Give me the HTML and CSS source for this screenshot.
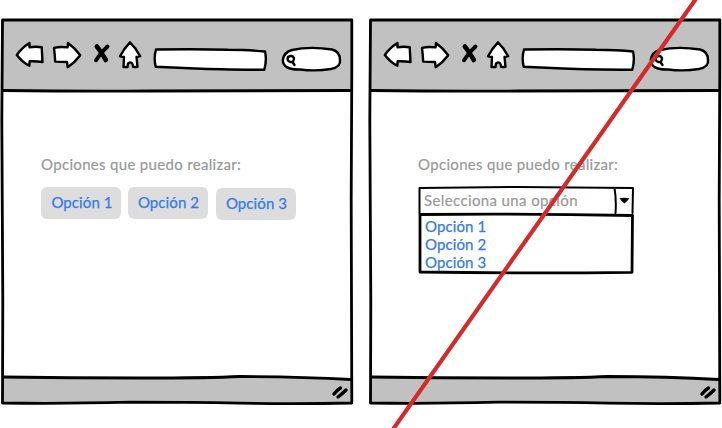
FILE: index.html
```html
<!DOCTYPE html>
<html lang="es">
<head>
<meta charset="utf-8">
<title>Opciones</title>
<link rel="stylesheet" href="styles.css">
</head>
<body>
<svg class="defs" aria-hidden="true">
  <symbol id="frame" viewBox="0 0 354 428">
    <path class="fill-bar" d="M3 20H351V91H3ZM3 377Q70 378 140 378T240 376.500Q300 376.500 351 379.500V403H3Z"/>
    <path class="ink edge" d="M2.500 20H351.800V70L351.200 200L351.800 403Q300 404 240 403.200Q190 402.200 130 402.200Q60 404 2.500 403L2.800 300L1.800 120L2.500 20"/>
    <path class="ink edge" d="M3 90.500Q80 91.500 150 91T351 90.500M3 377Q70 378 140 378T240 376.500Q300 376.500 351 379.500"/>
    <path class="ink grip" d="M334 394Q336.500 390.500 340.500 388M338 397Q342 394 346 390"/>
  </symbol>
  <symbol id="back" viewBox="15 40 30 30"><path class="ink paper" d="M16.800 55Q22 47.500 29.500 43L29.500 47.200Q36 46.200 41.700 47.200L42.500 62Q36 61 29.700 61.300L29.300 65.800Q22 62 16.800 55Z"/></symbol>
  <symbol id="forward" viewBox="51 40 32 30"><path class="ink paper" d="M54 47.800Q60 46.500 67.600 47.400L68 43Q75 48 80.200 55.300Q75 62.500 67.700 67.200L67 62L55.200 61.600Q54.800 54 54 47.800Z"/></symbol>
  <symbol id="stop" viewBox="92 40 20 30"><path class="ink stroke-a" d="M96.800 46.500Q101 51.500 105.800 60"/><path class="ink stroke-b" d="M107.500 46.500Q101 52 96 60.200"/></symbol>
  <symbol id="home" viewBox="118 40 24 30"><path class="ink paper" d="M130 42.300Q136 48 140.200 56.200L136.500 57L137.500 66.800Q135 67.200 133 66.800Q133 64.500 131.800 63Q129.500 61.700 128 63.500L127.500 67L123.500 67L124 57L120 56.200Q124 48.500 130 42.300Z"/></symbol>
  <symbol id="address" viewBox="152 40 116 34"><path class="ink paper" d="M156 49.500Q200 48.800 228 49.800Q250 50 265 51.500Q267 60 264.300 69.800Q220 69.500 195 68.500Q175 67.500 155.700 66.700Q153.500 58 156 49.500Z"/></symbol>
  <symbol id="search" viewBox="280 40 64 34"><path class="ink paper" d="M292 50Q310 46 332 49.500Q340 51.500 340 60Q341 67 331 69Q316 71.500 300 69.500Q283 70 282.800 60Q284 52 292 50Z"/><path class="ink" d="M288 57Q292 54.500 294 58Q294 62.500 290.500 62Q286.500 61 288 57M292.500 62L294.500 65"/></symbol>
</svg>

<main class="board">
  <section class="window">
    <svg class="frame"><use href="#frame"/></svg>
    <nav class="toolbar">
      <svg class="back"><use href="#back"/></svg>
      <svg class="forward"><use href="#forward"/></svg>
      <svg class="stop"><use href="#stop"/></svg>
      <svg class="home"><use href="#home"/></svg>
      <svg class="address"><use href="#address"/></svg>
      <svg class="search"><use href="#search"/></svg>
    </nav>
    <div class="content">
      <p class="prompt">Opciones que puedo realizar:</p>
      <div class="buttons">
        <button class="first">Opción 1</button>
        <button>Opción 2</button>
        <button class="last">Opción 3</button>
      </div>
    </div>
  </section>

  <section class="window">
    <svg class="frame"><use href="#frame"/></svg>
    <nav class="toolbar">
      <svg class="back"><use href="#back"/></svg>
      <svg class="forward"><use href="#forward"/></svg>
      <svg class="stop"><use href="#stop"/></svg>
      <svg class="home"><use href="#home"/></svg>
      <svg class="address"><use href="#address"/></svg>
      <svg class="search"><use href="#search"/></svg>
    </nav>
    <div class="content content-select">
      <p class="prompt">Opciones que puedo realizar:</p>
      <div class="dropdown">
        <svg class="dropdown-lines" viewBox="0 0 218 90">
          <path class="ink thin" d="M1.500 3L100 2L215 3L214.500 28M1.500 3L1.500 28.500M196.500 3Q198.500 15 197.500 28"/>
          <path class="ink edge" d="M2 29.500Q110 28.500 214.500 30.500L214 87.300Q110 88.500 2 87Z"/>
          <path d="M201.500 13.200Q206 12.500 211.500 13.200Q209 16.500 206.500 18.500Q203.500 16.500 201.500 13.200Z"/>
        </svg>
        <div class="selected">Selecciona una opción</div>
        <ul class="options">
          <li>Opción 1</li>
          <li>Opción 2</li>
          <li>Opción 3</li>
        </ul>
      </div>
    </div>
  </section>
  <svg class="strike" viewBox="0 0 722 428"><path d="M696.500 -2L392.500 430"/></svg>
</main>
</body>
</html>
```

FILE: styles.css
```css
* { box-sizing: border-box; }

body {
  margin: 0;
  background: #fff;
  font-family: Lato, "Open Sans", sans-serif;
  font-size: 15px;
  line-height: 18px;
  overflow: hidden;
}

.defs { position: absolute; width: 0; height: 0; }

.ink {
  fill: none;
  stroke: #000;
  stroke-width: 2.4;
  stroke-linecap: round;
  stroke-linejoin: round;
}
.thin { stroke-width: 2; }
.edge { stroke-width: 2.8; }
.grip { stroke-width: 3.4; }
.stroke-a { stroke-width: 4.6; }
.stroke-b { stroke-width: 4; }
.paper { fill: #fff; }
.fill-bar { fill: #c1c1c1; }

.board {
  position: relative;
  display: flex;
  gap: 14px;
  width: 722px;
  height: 428px;
  overflow: hidden;
}

.window {
  position: relative;
  flex: none;
  width: 354px;
  height: 428px;
}

.frame {
  position: absolute;
  inset: 0;
  z-index: -1;
  width: 354px;
  height: 428px;
}

.toolbar {
  display: flex;
  height: 91px;
  padding: 40px 0 0 15px;
}
.toolbar svg { flex: none; height: 30px; }
.toolbar .back { width: 30px; margin-right: 6px; }
.toolbar .forward { width: 32px; margin-right: 9px; }
.toolbar .stop { width: 20px; margin-right: 6px; }
.toolbar .home { width: 24px; margin-right: 10px; }
.toolbar .address { width: 116px; height: 34px; margin-right: 12px; }
.toolbar .search { width: 64px; height: 34px; }

.content { padding: 64px 0 0 41px; }
.content-select { padding-left: 50px; }

.prompt {
  margin: 0 0 14px;
  color: #999;
  letter-spacing: 0.32px;
  white-space: nowrap;
  -webkit-text-stroke: 0.2px;
}

.buttons { display: flex; gap: 7px; }
.buttons button {
  width: 80px;
  height: 32px;
  padding: 0 0 2px 1px;
  border: 0;
  border-radius: 6px;
  background: #ddd;
  color: #337aec;
  font: inherit;
  letter-spacing: 0.1px;
  -webkit-text-stroke: 0.25px;
}
.buttons .first { padding-left: 2px; }
.buttons .last { margin: 1px 0 0 1px; }

.dropdown {
  position: relative;
  width: 218px;
  height: 90px;
  margin-top: -2px;
}
.dropdown-lines {
  position: absolute;
  inset: 0;
  z-index: -1;
  width: 218px;
  height: 90px;
}
.selected {
  padding: 6px 0 0 6px;
  color: #999;
  letter-spacing: 0.38px;
  white-space: nowrap;
  -webkit-text-stroke: 0.2px;
}
.options {
  margin: 0;
  padding: 8px 0 0 7px;
  list-style: none;
  color: #337aec;
  letter-spacing: 0.1px;
  -webkit-text-stroke: 0.25px;
}

.strike {
  position: absolute;
  inset: 0;
  width: 722px;
  height: 428px;
}
.strike path {
  fill: none;
  stroke: #d12b2b;
  stroke-width: 4.2;
}
```
